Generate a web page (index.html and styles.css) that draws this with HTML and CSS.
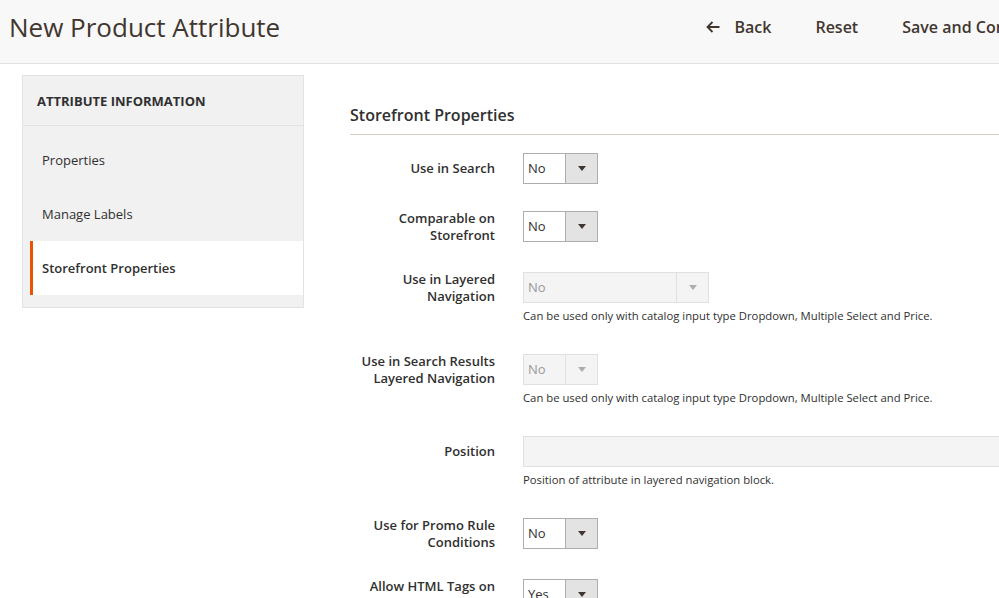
FILE: index.html
```html
<!DOCTYPE html>
<html lang="en">
<head>
<meta charset="utf-8">
<title>New Product Attribute</title>
<link rel="stylesheet" href="styles.css">
</head>
<body>
<div class="page">
  <header class="page-header">
    <h1 class="page-title">New Product Attribute</h1>
    <div class="actions">
      <button class="action back">
        <svg class="back-icon" width="14" height="12" viewBox="0 0 14 12"><path d="M13.5 6H1.5M6.5 1L1.5 6L6.5 11" fill="none" stroke="#41362f" stroke-width="1.8"/></svg>
        <span>Back</span>
      </button>
      <button class="action">Reset</button>
      <button class="action">Save and Continue Edit</button>
    </div>
  </header>

  <div class="layout">
    <aside class="side-nav">
      <div class="side-title">ATTRIBUTE INFORMATION</div>
      <ul class="side-items">
        <li class="side-item">Properties</li>
        <li class="side-item">Manage Labels</li>
        <li class="side-item active">Storefront Properties</li>
      </ul>
    </aside>

    <main class="main">
      <h2 class="section-title">Storefront Properties</h2>
      <div class="fieldset">
        <div class="field">
          <label class="field-label">Use in Search</label>
          <div class="control"><div class="select"><span class="value">No</span><span class="arrow"></span></div></div>
        </div>
        <div class="field">
          <label class="field-label">Comparable on Storefront</label>
          <div class="control"><div class="select"><span class="value">No</span><span class="arrow"></span></div></div>
        </div>
        <div class="field">
          <label class="field-label">Use in Layered Navigation</label>
          <div class="control"><div class="select wide disabled"><span class="value">No</span><span class="arrow"></span></div></div>
          <div class="note">Can be used only with catalog input type Dropdown, Multiple Select and Price.</div>
        </div>
        <div class="field">
          <label class="field-label">Use in Search Results Layered Navigation</label>
          <div class="control"><div class="select disabled"><span class="value">No</span><span class="arrow"></span></div></div>
          <div class="note">Can be used only with catalog input type Dropdown, Multiple Select and Price.</div>
        </div>
        <div class="field">
          <label class="field-label">Position</label>
          <div class="control"><div class="text-input disabled"></div></div>
          <div class="note">Position of attribute in layered navigation block.</div>
        </div>
        <div class="field">
          <label class="field-label">Use for Promo Rule Conditions</label>
          <div class="control"><div class="select"><span class="value">No</span><span class="arrow"></span></div></div>
        </div>
        <div class="field">
          <label class="field-label">Allow HTML Tags on Storefront</label>
          <div class="control"><div class="select"><span class="value">Yes</span><span class="arrow"></span></div></div>
        </div>
      </div>
    </main>
  </div>
</div>
</body>
</html>
```

FILE: styles.css
```css
html, body {
  margin: 0;
  padding: 0;
  background: #ffffff;
  overflow: hidden;
}
body {
  font-family: "Open Sans", "Noto Sans", "Liberation Sans", sans-serif;
  color: #303030;
}
.page {
  width: 1102px;
}
.page-header {
  display: flex;
  align-items: center;
  height: 63px;
  background: #f8f8f8;
  border-bottom: 1px solid #e3e3e3;
  box-sizing: content-box;
  padding: 0 0 0 9px;
}
.page-title {
  margin: 0 0 10px 0;
  font-size: 26px;
  font-weight: 400;
  line-height: 34px;
  color: #41362f;
  flex: 1;
}
.actions {
  display: flex;
  align-items: center;
  margin-bottom: 10px;
}
.action {
  border: 0;
  background: transparent;
  font-family: inherit;
  font-size: 16px;
  font-weight: 600;
  color: #41362f;
  padding: 0 22px;
  display: flex;
  align-items: center;
  line-height: 20px;
  cursor: pointer;
}
.action.back {
  gap: 14px;
}
.back-icon {
  display: block;
}
.layout {
  display: flex;
  padding: 11px 0 0 22px;
  gap: 46px;
}
.side-nav {
  width: 280px;
  flex: none;
  background: #f1f1f1;
  border: 1px solid #e3e3e3;
  align-self: flex-start;
}
.side-title {
  height: 49px;
  border-bottom: 1px solid #e3e3e3;
  padding-left: 14px;
  display: flex;
  align-items: center;
  font-size: 13px;
  font-weight: 700;
  color: #303030;
}
.side-items {
  list-style: none;
  margin: 0;
  padding: 7px 0 12px 7px;
}
.side-item {
  height: 54px;
  display: flex;
  align-items: center;
  padding-left: 12px;
  font-size: 13px;
  color: #303030;
}
.side-item.active {
  background: #ffffff;
  border-left: 3px solid #eb5202;
  padding-left: 9px;
  font-weight: 600;
}
.main {
  flex: 1;
}
.section-title {
  margin: 0;
  padding: 30px 0 9px;
  font-size: 16px;
  font-weight: 600;
  line-height: 20px;
  color: #303030;
  border-bottom: 1px solid #d6cfc6;
}
.fieldset {
  padding-top: 18px;
}
.field {
  display: grid;
  grid-template-columns: 145px 1fr;
  grid-template-rows: 31px auto;
  column-gap: 28px;
  margin-bottom: 30px;
}
.field:first-child {
  margin-bottom: 27px;
}
.field-label {
  grid-column: 1;
  grid-row: 1;
  align-self: center;
  text-align: right;
  font-size: 13px;
  font-weight: 600;
  line-height: 17px;
  color: #303030;
}
.control {
  grid-column: 2;
  grid-row: 1;
}
.note {
  grid-column: 2;
  grid-row: 2;
  font-size: 11.3px;
  line-height: 17px;
  margin-top: 4px;
  color: #303030;
}
.select {
  display: flex;
  width: 75px;
  height: 31px;
  box-sizing: border-box;
  border: 1px solid #adadad;
  background: #ffffff;
}
.select .value {
  flex: 1;
  padding-left: 4px;
  font-size: 13px;
  line-height: 29px;
  color: #303030;
}
.select .arrow {
  width: 31px;
  border-left: 1px solid #adadad;
  background: #e3e3e3;
  display: flex;
  align-items: center;
  justify-content: center;
}
.select .arrow::after {
  content: "";
  width: 0;
  height: 0;
  border-left: 4px solid transparent;
  border-right: 4px solid transparent;
  border-top: 5px solid #41362f;
}
.select.wide {
  width: 186px;
}
.select.disabled {
  border-color: #e0e0e0;
  background: #f4f4f4;
}
.select.disabled .value {
  color: #999999;
}
.select.disabled .arrow {
  background: #f4f4f4;
  border-left-color: #e0e0e0;
}
.select.disabled .arrow::after {
  border-top-color: #adadad;
}
.text-input {
  height: 31px;
  box-sizing: border-box;
  border: 1px solid #e0e0e0;
  background: #f4f4f4;
}
```
